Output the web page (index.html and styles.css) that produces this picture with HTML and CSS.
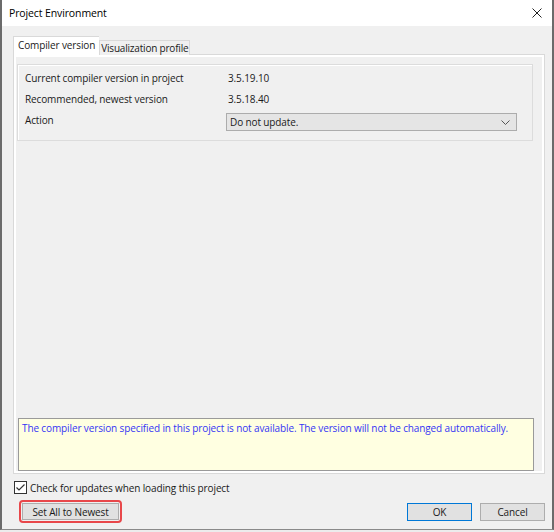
FILE: index.html
```html
<!DOCTYPE html>
<html lang="en">
<head>
    <meta charset="UTF-8">
    <meta name="viewport" content="width=device-width, initial-scale=1.0">
    <title>Project Environment</title>
    <link rel="stylesheet" href="styles.css">
</head>
<body>
    <div class="window">
        <div class="titlebar">
            <span class="title">Project Environment</span>
            <svg class="close" width="10" height="10" viewBox="0 0 10 10">
                <path d="M0.5 0.5 L9.5 9.5 M9.5 0.5 L0.5 9.5" stroke="#222" stroke-width="1" fill="none"/>
            </svg>
        </div>

        <div class="content">
            <div class="tabs">
                <div class="tab active">Compiler version</div>
                <div class="tab">Visualization profile</div>
            </div>

            <div class="panel">
                <div class="group">
                    <div class="row">
                        <span class="label">Current compiler version in project</span>
                        <span class="value">3.5.19.10</span>
                    </div>
                    <div class="row">
                        <span class="label">Recommended, newest version</span>
                        <span class="value">3.5.18.40</span>
                    </div>
                    <div class="row">
                        <span class="label">Action</span>
                        <div class="select">
                            <span>Do not update.</span>
                            <svg width="9" height="5" viewBox="0 0 9 5">
                                <path d="M0.5 0.5 L4.5 4.5 L8.5 0.5" stroke="#555" stroke-width="1" fill="none"/>
                            </svg>
                        </div>
                    </div>
                </div>

                <div class="message">The compiler version specified in this project is not available. The version will not be changed automatically.</div>
            </div>

            <label class="check">
                <svg width="13" height="13" viewBox="0 0 13 13">
                    <rect x="0.5" y="0.5" width="12" height="12" fill="#fff" stroke="#333"/>
                    <path d="M2.5 6.5 L5 9 L10.5 3.5" stroke="#333" stroke-width="1.2" fill="none"/>
                </svg>
                <span>Check for updates when loading this project</span>
            </label>

            <div class="buttons">
                <span class="highlight"><button class="btn wide">Set All to Newest</button></span>
                <div class="right">
                    <button class="btn default">OK</button>
                    <button class="btn">Cancel</button>
                </div>
            </div>
        </div>
    </div>
</body>
</html>
```

FILE: styles.css
```css
body {
    margin: 0;
    background-color: #ececec;
    font-family: 'Open Sans', 'Noto Sans', sans-serif;
    font-size: 10px;
    letter-spacing: -0.12px;
    color: #1a1a1a;
}
.window {
    width: 554px;
    height: 530px;
    box-sizing: border-box;
    display: flex;
    flex-direction: column;
    border-left: 2px solid #6b6b6b;
    border-right: 2px solid #6b6b6b;
    border-bottom: 1px solid #8a8a8a;
    background-color: #f0f0f0;
}
.titlebar {
    height: 26px;
    flex-shrink: 0;
    background-color: #fff;
    display: flex;
    align-items: center;
    justify-content: space-between;
    padding: 0 10px 0 7px;
}
.title {
    font-size: 10.5px;
    color: #000;
    margin-top: -1px;
}
.close {
    margin-top: -1px;
}
.content {
    flex: 1;
    display: flex;
    flex-direction: column;
    padding: 11px 7px 6px 11px;
    min-height: 0;
}
.tabs {
    display: flex;
    align-items: flex-end;
    height: 18px;
    margin-bottom: -1px;
    position: relative;
    z-index: 1;
}
.tab {
    height: 15px;
    box-sizing: border-box;
    padding: 0 1px;
    border: 1px solid #d9d9d9;
    border-bottom: none;
    background-color: #f0f0f0;
    line-height: 14px;
    letter-spacing: -0.2px;
}
.tab.active {
    height: 19px;
    padding: 0 4px;
    background-color: #fff;
    line-height: 16px;
    border-right: none;
    letter-spacing: -0.12px;
}
.panel {
    flex: 1;
    display: flex;
    flex-direction: column;
    border: 1px solid #d9d9d9;
    box-shadow: inset 0 0 0 2px #fff;
    padding: 9px 11px 2px 3px;
}
.group {
    border: 1px solid #dcdcdc;
    box-shadow: inset 1px 1px 0 #fff;
    padding: 3px 15px 9px 7px;
}
.row {
    display: flex;
    align-items: flex-start;
}
.label {
    width: 203px;
    line-height: 21px;
}
.value {
    line-height: 21px;
}
.select {
    margin: 3px 0 0 -2px;
    flex: 1;
    height: 18px;
    box-sizing: border-box;
    border: 1px solid #acacac;
    background-color: #e5e5e5;
    display: flex;
    align-items: center;
    justify-content: space-between;
    padding: 0 6px 0 3px;
}
.message {
    margin: auto -1px 0 1px;
    height: 53px;
    box-sizing: border-box;
    border: 1px solid #9a9a9a;
    background-color: #ffffe1;
    color: #3535f5;
    padding: 2px 3px;
}
.check {
    display: flex;
    align-items: center;
    gap: 3px;
    margin: 7px 0 0 1px;
    height: 13px;
}
.buttons {
    display: flex;
    justify-content: space-between;
    align-items: center;
    margin-top: 6px;
    height: 23px;
}
.highlight {
    border: 2px solid #e8474a;
    border-radius: 4px;
    padding: 1px;
    margin-left: 6px;
}
.btn {
    font-family: inherit;
    font-size: 10px;
    letter-spacing: -0.12px;
    color: #1a1a1a;
    height: 18px;
    width: 65px;
    padding: 0;
    border: 1px solid #adadad;
    background-color: #e1e1e1;
    display: block;
}
.btn.wide {
    width: 97px;
    height: 17px;
}
.btn.default {
    border-color: #0078d7;
}
.right {
    display: flex;
    gap: 8px;
}
```
